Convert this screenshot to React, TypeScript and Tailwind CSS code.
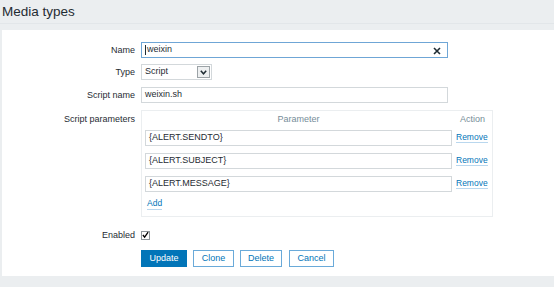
import type { ReactNode } from "react";

const PARAMS = ["{ALERT.SENDTO}", "{ALERT.SUBJECT}", "{ALERT.MESSAGE}"];

function Row({
  label,
  children,
  className = "",
  top = false,
}: {
  label: string;
  children: ReactNode;
  className?: string;
  top?: boolean;
}) {
  return (
    <div className={`flex ${top ? "items-start" : "items-center"} ${className}`}>
      <div
        className={`w-[133px] shrink-0 text-right leading-[16px] ${top ? "mt-[1px]" : ""}`}
      >
        {label}
      </div>
      <div className="ml-[6px] flex">{children}</div>
    </div>
  );
}

function TextBox({ value, focused = false }: { value: string; focused?: boolean }) {
  return (
    <div
      className={`relative flex h-[16px] w-[307px] items-center border px-[3px] ${
        focused ? "border-[#6fa6d6]" : "border-[#d3d8db]"
      } bg-white`}
    >
      {focused && <span className="mr-[1px] h-[10px] w-px bg-[#1f2c33]" />}
      <span>{value}</span>
      {focused && (
        <svg
          className="absolute right-[6px] top-[4px]"
          width="8"
          height="8"
          viewBox="0 0 8 8"
        >
          <path d="M1 1 L7 7 M7 1 L1 7" stroke="#1f2c33" strokeWidth="1.6" />
        </svg>
      )}
    </div>
  );
}

function LinkText({ children }: { children: ReactNode }) {
  return (
    <span className="border-b border-[#b9d7ee] text-[8.5px] leading-[11px] text-[#0275b8]">
      {children}
    </span>
  );
}

export default function App() {
  return (
    <div className="min-h-[287px] bg-[#ebeef0] font-['Liberation_Sans',Arial,sans-serif] text-[9px] text-[#1f2c33]">
      <div className="h-[24px] border-b border-[#e2e6e9] pl-[2px] pt-[3px] text-[13.5px] leading-[17px]">
        Media types
      </div>

      <div className="ml-[2px] mt-[6px] h-[246px] bg-white pt-[12px]">
        <Row label="Name">
          <TextBox value="weixin" focused />
        </Row>

        <Row label="Type" className="mt-[6px]">
          <div className="flex h-[16px] w-[71px] items-center justify-between border border-[#d3d8db] bg-white pl-[3px] pr-[1px]">
            <span>Script</span>
            <div className="flex h-[12px] w-[13px] items-center justify-center border border-[#9ca3a7] bg-[#eef0f1]">
              <svg width="7" height="5" viewBox="0 0 7 5">
                <path d="M0.8 0.8 L3.5 3.8 L6.2 0.8" fill="none" stroke="#1f2c33" strokeWidth="1.5" />
              </svg>
            </div>
          </div>
        </Row>

        <Row label="Script name" className="mt-[7px]">
          <TextBox value="weixin.sh" />
        </Row>

        <Row label="Script parameters" className="mt-[7px]" top>
          <div className="h-[107px] w-[352px] border border-[#ebeef0] pl-[3px]">
            <div className="mt-[1px] flex h-[16px] items-center text-[#768d99]">
              <div className="w-[307px] text-center">Parameter</div>
              <div className="ml-[4px] w-[33px] text-center">Action</div>
            </div>
            <div className="mt-[2px] flex flex-col gap-[7px]">
              {PARAMS.map((p) => (
                <div key={p} className="flex items-center">
                  <TextBox value={p} />
                  <div className="ml-[4px]">
                    <LinkText>Remove</LinkText>
                  </div>
                </div>
              ))}
            </div>
            <div className="mt-[4px] flex h-[16px] items-center pl-[2px]">
              <LinkText>Add</LinkText>
            </div>
          </div>
        </Row>

        <Row label="Enabled" className="mt-[10px] h-[16px]">
          <div className="flex h-[9px] w-[9px] items-center justify-center border border-[#8f979c] bg-white">
            <svg width="8" height="8" viewBox="0 0 8 8">
              <path d="M1 4 L3 6.5 L7 0.8" fill="none" stroke="#000" strokeWidth="1.5" />
            </svg>
          </div>
        </Row>

        <div className="ml-[139px] mt-[7px] flex">
          <div className="flex h-[17px] w-[46px] items-center justify-center bg-[#0275b8] text-white">
            Update
          </div>
          <div className="ml-[6px] flex h-[17px] w-[41px] items-center justify-center border border-[#6aaad9] text-[#0275b8]">
            Clone
          </div>
          <div className="ml-[6px] flex h-[17px] w-[42px] items-center justify-center border border-[#6aaad9] text-[#0275b8]">
            Delete
          </div>
          <div className="ml-[7px] flex h-[17px] w-[45px] items-center justify-center border border-[#6aaad9] text-[#0275b8]">
            Cancel
          </div>
        </div>
      </div>
    </div>
  );
}
